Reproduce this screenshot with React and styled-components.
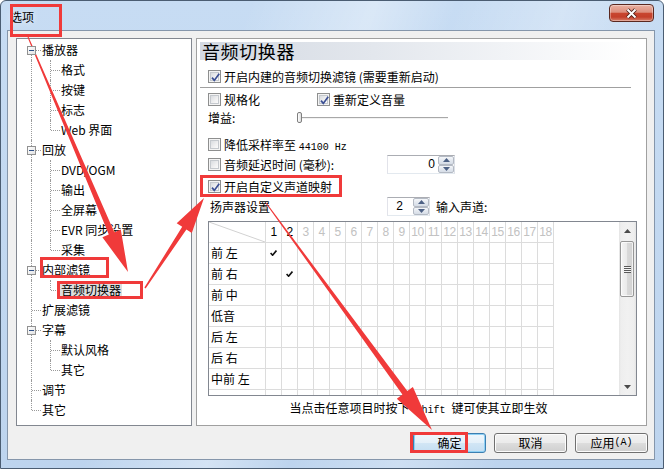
import React from "react";
import styled, { createGlobalStyle } from "styled-components";

const CJK = `"Noto Sans CJK SC", "Noto Sans", sans-serif`;
const MONO = `"Liberation Mono", "DejaVu Sans Mono", monospace`;
const LATIN = `"Liberation Sans", Arial, sans-serif`;

const GlobalStyle = createGlobalStyle`
  html, body { margin: 0; padding: 0; background: #fff; }
  body { font-family: ${CJK}; font-size: 12px; color: #000; }
  * { box-sizing: border-box; }
`;

const Window = styled.div`
  position: relative;
  width: 664px;
  height: 469px;
  border: 1px solid #4b5d72;
  border-radius: 6px 6px 0 0;
  background:
    linear-gradient(110deg, rgba(255,255,255,0) 30%, rgba(255,255,255,0.35) 45%, rgba(255,255,255,0) 55%, rgba(255,255,255,0.25) 68%, rgba(255,255,255,0) 80%),
    linear-gradient(180deg, #c7dcf3 0%, #bdd4ee 100%);
  display: flex;
  flex-direction: column;
  overflow: hidden;
`;

const TitleBar = styled.div`
  height: 29px;
  flex: none;
  display: flex;
  align-items: flex-start;
  justify-content: space-between;
  padding: 0 9px 0 9px;
`;

const Title = styled.div`
  margin-top: 2px;
  line-height: 28px;
  font-size: 12px;
  text-shadow: 0 0 6px rgba(255, 255, 255, 0.95);
`;

const CloseBtn = styled.div`
  margin-top: 3px;
  width: 45px;
  height: 18px;
  border: 1px solid #5a2820;
  border-radius: 4px;
  background: linear-gradient(180deg, #eab0a2 0%, #dd8f7d 45%, #c8462f 52%, #c43f2a 75%, #d77f6a 100%);
  box-shadow: inset 0 0 0 1px rgba(255, 255, 255, 0.35);
  display: flex;
  align-items: center;
  justify-content: center;
`;

const Client = styled.div`
  flex: 1;
  margin: 0 8px 8px 6px;
  border: 1px solid #8596ab;
  background: #f0f0f0;
  padding: 7px 6px 0 8px;
  display: flex;
  flex-direction: column;
`;

const Main = styled.div`
  display: flex;
  gap: 4px;
  height: 388px;
  flex: none;
`;

/* ---------- Tree ---------- */

const TreePanel = styled.div`
  width: 176px;
  height: 100%;
  border: 1px solid #828790;
  background: #fff;
  padding: 1px 0 0 5px;
  display: flex;
  flex-direction: column;
`;

const TreeRow = styled.div`
  display: flex;
  align-items: center;
  height: 20px;
`;

const Gutter = styled.div`
  position: relative;
  width: 19px;
  height: 20px;
  flex: none;
  &::before {
    content: "";
    position: absolute;
    left: 9px;
    top: ${(p) => (p.$v === "bottom" ? "10px" : "0")};
    height: ${(p) => (p.$v === "full" ? "20px" : p.$v === "none" ? "0" : "10px")};
    border-left: ${(p) => (p.$v === "none" ? "0" : "1px dotted #9a9a9a")};
  }
  &::after {
    content: "";
    position: absolute;
    left: 10px;
    top: 10px;
    width: ${(p) => (p.$h ? "9px" : "0")};
    border-top: ${(p) => (p.$h ? "1px dotted #9a9a9a" : "0")};
  }
`;

const Expander = styled.div`
  position: absolute;
  left: 5px;
  top: 6px;
  width: 9px;
  height: 9px;
  border: 1px solid #919191;
  background: linear-gradient(135deg, #ffffff 0%, #e2e2e2 100%);
  z-index: 1;
  &::after {
    content: "";
    position: absolute;
    left: 1px;
    top: 3px;
    width: 5px;
    height: 1px;
    background: #2e4f85;
  }
`;

const TreeLabel = styled.span`
  padding: 0 1px;
  line-height: 16px;
  height: 16px;
  white-space: nowrap;
  background: ${(p) => (p.$selected ? "#dedede" : "transparent")};
`;

const tree = [
  { label: "播放器", kids: ["格式", "按键", "标志", "Web 界面"] },
  { label: "回放", kids: ["DVD/OGM", "输出", "全屏幕", "EVR 同步设置", "采集"] },
  { label: "内部滤镜", kids: ["音频切换器"], selected: 0 },
  { label: "扩展滤镜" },
  { label: "字幕", kids: ["默认风格", "其它"] },
  { label: "调节" },
  { label: "其它" },
];

function Tree() {
  const rows = [];
  tree.forEach((node, i) => {
    const v = i === 0 ? "bottom" : i === tree.length - 1 ? "top" : "full";
    rows.push(
      <TreeRow key={`r${i}`}>
        <Gutter $v={v} $h>
          {node.kids && <Expander />}
        </Gutter>
        <TreeLabel>{node.label}</TreeLabel>
      </TreeRow>
    );
    (node.kids || []).forEach((k, j) => {
      rows.push(
        <TreeRow key={`r${i}-${j}`}>
          <Gutter $v="full" />
          <Gutter $v={j === node.kids.length - 1 ? "top" : "full"} $h />
          <TreeLabel $selected={node.selected === j}>{k}</TreeLabel>
        </TreeRow>
      );
    });
  });
  return <TreePanel>{rows}</TreePanel>;
}

/* ---------- Right panel ---------- */

const RightPanel = styled.div`
  width: 451px;
  height: 100%;
  border: 1px solid #a0a0a0;
  background: #fff;
  padding-top: 3px;
  display: flex;
  flex-direction: column;
`;

const Header = styled.div`
  margin: 0 12px 0 3px;
  height: 18px;
  padding-left: 2px;
  background: linear-gradient(90deg, #d3d9e2 0%, #e3e7ed 40%, #ffffff 100%);
  font-size: 18px;
  line-height: 18px;
  letter-spacing: 0.6px;
  white-space: nowrap;
`;

const Body = styled.div`
  padding-left: 11px;
  display: flex;
  flex-direction: column;
`;

const Row = styled.div`
  display: flex;
  align-items: center;
  height: ${(p) => p.$h || 18}px;
  margin-top: ${(p) => p.$mt || 0}px;
  white-space: nowrap;
`;

const Separator = styled.div`
  margin: 2px 0 0 -8px;
  width: 431px;
  height: 1px;
  background: #a0a0a0;
`;

const CheckWrap = styled.label`
  display: flex;
  align-items: center;
  gap: 3px;
  width: ${(p) => (p.$w ? `${p.$w}px` : "auto")};
  flex: none;
`;

const Box = styled.span`
  position: relative;
  width: 13px;
  height: 13px;
  flex: none;
  border: 1px solid #8e8f8f;
  background: #f4f4f4;
  padding: 1px;
  display: inline-flex;
`;

const BoxInner = styled.span`
  flex: 1;
  border: 1px solid #c5c9ce;
  background: linear-gradient(135deg, #d9dce0 0%, #f0f0f1 60%, #fbfbfb 100%);
`;

const CheckSvg = styled.svg`
  position: absolute;
  left: 1px;
  top: 1px;
`;

function Check({ checked, children, w }) {
  return (
    <CheckWrap $w={w}>
      <Box>
        <BoxInner />
        {checked && (
          <CheckSvg width="11" height="11" viewBox="0 0 11 11">
            <path d="M2 5.6 L4.3 8.4 L9.2 1.8" fill="none" stroke="#3b4f94" strokeWidth="1.7" />
          </CheckSvg>
        )}
      </Box>
      <span>{children}</span>
    </CheckWrap>
  );
}

const Mono = styled.span`
  font-family: ${MONO};
  font-size: 10px;
`;

const FixedLabel = styled.span`
  width: ${(p) => p.$w}px;
  flex: none;
  padding-left: ${(p) => p.$pl || 0}px;
`;

const Thumb = styled.div`
  width: 5px;
  height: 11px;
  border: 1px solid #7f7f7f;
  border-radius: 2px;
  background: linear-gradient(90deg, #ffffff, #dcdcdc);
  flex: none;
`;

const Track = styled.div`
  width: 146px;
  height: 2px;
  border-top: 1px solid #a8a8a8;
  border-bottom: 1px solid #f2f2f2;
  margin-top: 1px;
`;

const Spin = styled.div`
  display: flex;
  width: ${(p) => p.$w}px;
  height: 19px;
  border: 1px solid #abadb3;
  border-color: #abadb3 #dbdfe6 #e3e9ef #e2e3ea;
  background: #fff;
  flex: none;
`;

const SpinValue = styled.div`
  flex: 1;
  text-align: right;
  padding-right: ${(p) => p.$pr}px;
  line-height: 17px;
  font-family: ${LATIN};
  font-size: 12px;
`;

const SpinButtons = styled.div`
  width: 16px;
  display: flex;
  flex-direction: column;
`;

const SpinBtn = styled.div`
  flex: 1;
  border: 1px solid #b4bac4;
  border-radius: 2px;
  background: linear-gradient(180deg, #f5f7fa 0%, #e3e8ef 50%, #d6dde7 100%);
  display: flex;
  align-items: center;
  justify-content: center;
`;

function Tri({ down }) {
  return (
    <svg width="7" height="4" viewBox="0 0 7 4">
      <path d={down ? "M0 0 H7 L3.5 4 Z" : "M0 4 H7 L3.5 0 Z"} fill="#4d6185" />
    </svg>
  );
}

function SpinBox({ w, value, pr }) {
  return (
    <Spin $w={w}>
      <SpinValue $pr={pr}>{value}</SpinValue>
      <SpinButtons>
        <SpinBtn>
          <Tri />
        </SpinBtn>
        <SpinBtn>
          <Tri down />
        </SpinBtn>
      </SpinButtons>
    </Spin>
  );
}

/* ---------- Mapping grid ---------- */

const GridBox = styled.div`
  margin-top: 5px;
  width: 429px;
  height: 175px;
  border: 1px solid #828790;
  display: flex;
  background: #fff;
`;

const Table = styled.div`
  flex: 1;
  overflow: hidden;
`;

const TRow = styled.div`
  display: flex;
  height: 21px;
`;

const LabelCell = styled.div`
  position: relative;
  width: 57px;
  flex: none;
  border-right: 1px solid #dcdcdc;
  border-bottom: 1px solid #dcdcdc;
  padding-left: 2px;
  line-height: 20px;
  white-space: pre;
`;

const Cell = styled.div`
  width: 16px;
  flex: none;
  border-right: 1px solid #dcdcdc;
  border-bottom: 1px solid #dcdcdc;
  display: flex;
  align-items: center;
  justify-content: center;
  font-family: ${LATIN};
  font-size: 12px;
  letter-spacing: -0.5px;
  color: ${(p) => (p.$dim ? "#c2c2c2" : "#000")};
`;

const Diagonal = styled.svg`
  position: absolute;
  left: 0;
  top: 0;
`;

const ScrollBar = styled.div`
  width: 17px;
  flex: none;
  display: flex;
  flex-direction: column;
  background: linear-gradient(90deg, #e4e4e4 0, #eeeeee 2px, #f1f1f1 50%, #eeeeee calc(100% - 2px), #e4e4e4 100%);
`;

const ScrollArrow = styled.div`
  height: 17px;
  flex: none;
  display: flex;
  align-items: center;
  justify-content: center;
  margin-top: ${(p) => (p.$bottom ? "auto" : "0")};
`;

const ScrollThumb = styled.div`
  margin: 2px 2px 0 1px;
  height: 56px;
  border: 1px solid #979797;
  border-radius: 2px;
  background: linear-gradient(90deg, #f4f4f4 0%, #e9e9e9 50%, #d9d9d9 51%, #d2d2d2 100%);
  box-shadow: inset 0 0 0 1px rgba(255, 255, 255, 0.7);
  display: flex;
  align-items: center;
  justify-content: center;
`;

const Grip = styled.div`
  width: 7px;
  height: 7px;
  background: repeating-linear-gradient(180deg, #595959 0, #595959 1px, #f4f4f4 1px, #f4f4f4 2px);
`;

function Tick() {
  return (
    <svg width="7" height="6" viewBox="0 0 7 6">
      <path d="M0.6 3 L2.6 5.2 L6.4 0.6" fill="none" stroke="#111" strokeWidth="1.6" />
    </svg>
  );
}

/* the 8th row is only a few pixels tall in view, its label is hidden below the edge */
const speakers = ["前 左", "前 右", "前 中", "低音", "后 左", "后 右", "中前 左", ""];
const cols = Array.from({ length: 18 }, (_, i) => i + 1);

function MappingGrid() {
  return (
    <GridBox>
      <Table>
        <TRow>
          <LabelCell>
            <Diagonal width="56" height="20" viewBox="0 0 56 20">
              <line x1="0" y1="0" x2="56" y2="20" stroke="#d2d2d2" strokeWidth="1" />
            </Diagonal>
          </LabelCell>
          {cols.map((c) => (
            <Cell key={c} $dim={c > 2}>
              {c}
            </Cell>
          ))}
        </TRow>
        {speakers.map((s, r) => (
          <TRow key={`s${r}`}>
            <LabelCell>{s}</LabelCell>
            {cols.map((c) => (
              <Cell key={c}>{r < 2 && c === r + 1 ? <Tick /> : null}</Cell>
            ))}
          </TRow>
        ))}
      </Table>
      <ScrollBar>
        <ScrollArrow>
          <svg width="7" height="4" viewBox="0 0 7 4">
            <path d="M0 4 H7 L3.5 0 Z" fill="#4a4a4a" />
          </svg>
        </ScrollArrow>
        <ScrollThumb>
          <Grip />
        </ScrollThumb>
        <ScrollArrow $bottom>
          <svg width="7" height="4" viewBox="0 0 7 4">
            <path d="M0 0 H7 L3.5 4 Z" fill="#4a4a4a" />
          </svg>
        </ScrollArrow>
      </ScrollBar>
    </GridBox>
  );
}

const Caption = styled.div`
  margin-top: 3px;
  padding-right: 6px;
  text-align: center;
  line-height: 18px;
  white-space: nowrap;
`;

/* ---------- Buttons ---------- */

const ButtonRow = styled.div`
  margin-top: 7px;
  display: flex;
  justify-content: flex-end;
  gap: 8px;
`;

const Button = styled.div`
  width: 73px;
  height: 20px;
  border: 1px solid ${(p) => (p.$default ? "#3c7fb1" : "#707070")};
  border-radius: 3px;
  background: ${(p) =>
    p.$default
      ? "linear-gradient(180deg, #f0f7fc 0%, #e4f0f9 50%, #d2e6f5 51%, #c4def2 100%)"
      : "linear-gradient(180deg, #f2f2f2 0%, #ebebeb 50%, #dddddd 51%, #cfcfcf 100%)"};
  box-shadow: inset 0 0 0 1px ${(p) => (p.$default ? "#8fd0f4" : "#fcfcfc")};
  display: flex;
  align-items: center;
  justify-content: center;
  line-height: 18px;
`;

/* ---------- Annotations ---------- */

const Overlay = styled.svg`
  position: absolute;
  left: -1px;
  top: -1px;
  pointer-events: none;
`;

function arrowPoly([x0, y0], [x1, y1], w0, w1, L, W) {
  const dx = x1 - x0;
  const dy = y1 - y0;
  const len = Math.hypot(dx, dy);
  const ux = dx / len;
  const uy = dy / len;
  const nx = -uy;
  const ny = ux;
  const bx = x1 - ux * L;
  const by = y1 - uy * L;
  const pts = [
    [x0 + (nx * w0) / 2, y0 + (ny * w0) / 2],
    [bx + (nx * w1) / 2, by + (ny * w1) / 2],
    [bx + nx * W, by + ny * W],
    [x1, y1],
    [bx - nx * W, by - ny * W],
    [bx - (nx * w1) / 2, by - (ny * w1) / 2],
    [x0 - (nx * w0) / 2, y0 - (ny * w0) / 2],
  ];
  return pts.map((p) => p.map((v) => v.toFixed(1)).join(",")).join(" ");
}

const RED = "#f03a3a";

function Annotations() {
  return (
    <Overlay width="664" height="469" viewBox="0 0 664 469">
      <g fill="none" stroke={RED} strokeWidth="3">
        <rect x="11.5" y="5.5" width="49" height="30" />
        <rect x="41.5" y="258.5" width="66" height="18" />
        <rect x="58.5" y="282.5" width="83" height="15" />
        <rect x="201.5" y="176.5" width="139" height="19" />
        <rect x="411.5" y="433.5" width="55" height="18" />
      </g>
      <g fill={RED}>
        <polygon points={arrowPoly([28, 37], [128, 272], 1, 6, 42, 10)} />
        <polygon points={arrowPoly([145, 288], [204, 198], 1.5, 5, 36, 9)} />
        <polygon points={arrowPoly([266, 203], [432, 430], 1, 6, 46, 10)} />
      </g>
    </Overlay>
  );
}

export default function App() {
  return (
    <>
      <GlobalStyle />
      <Window>
        <TitleBar>
          <Title>选项</Title>
          <CloseBtn>
            <svg width="13" height="11" viewBox="0 0 13 11">
              <path d="M2.5 1.5 L10.5 9.5 M10.5 1.5 L2.5 9.5" stroke="#4a1d16" strokeWidth="3.8" />
              <path d="M2.5 1.5 L10.5 9.5 M10.5 1.5 L2.5 9.5" stroke="#ffffff" strokeWidth="2" />
            </svg>
          </CloseBtn>
        </TitleBar>
        <Client>
          <Main>
            <Tree />
            <RightPanel>
              <Header>音频切换器</Header>
              <Body>
                <Row $mt={7}>
                  <Check checked>开启内建的音频切换滤镜 (需要重新启动)</Check>
                </Row>
                <Separator />
                <Row $mt={2}>
                  <Check w={109}>规格化</Check>
                  <Check checked>重新定义音量</Check>
                </Row>
                <Row>
                  <FixedLabel $w={89}>增益:</FixedLabel>
                  <Thumb />
                  <Track />
                </Row>
                <Row $mt={9}>
                  <Check>
                    降低采样率至 <Mono>44100 Hz</Mono>
                  </Check>
                </Row>
                <Row $mt={2} $h={19}>
                  <Check w={179}>音频延迟时间 (毫秒):</Check>
                  <SpinBox w={68} value="0" pr={3} />
                </Row>
                <Row $mt={3}>
                  <Check checked>开启自定义声道映射</Check>
                </Row>
                <Row $mt={2} $h={19}>
                  <FixedLabel $w={179} $pl={2}>
                    扬声器设置
                  </FixedLabel>
                  <SpinBox w={43} value="2" pr={10} />
                  <FixedLabel $w={80} $pl={6}>
                    输入声道:
                  </FixedLabel>
                </Row>
                <MappingGrid />
              </Body>
              <Caption>
                当点击任意项目时按下<Mono> Shift </Mono>键可使其立即生效
              </Caption>
            </RightPanel>
          </Main>
          <ButtonRow>
            <Button $default>确定</Button>
            <Button>取消</Button>
            <Button>
              应用<Mono>(A)</Mono>
            </Button>
          </ButtonRow>
        </Client>
        <Annotations />
      </Window>
    </>
  );
}
